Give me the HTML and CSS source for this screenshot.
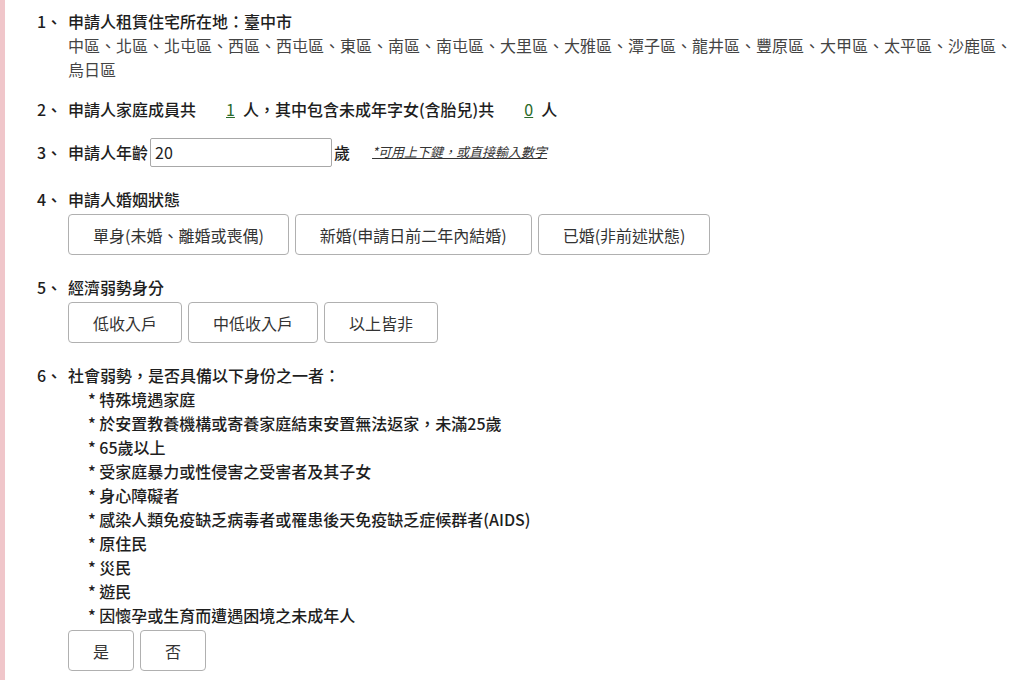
FILE: index.html
```html
<!DOCTYPE html>
<html lang="zh-TW">
<head>
<meta charset="utf-8">
<title>租金補貼試算</title>
<link rel="stylesheet" href="styles.css">
</head>
<body>
<div class="page">
  <div class="item">
    <span class="num">1、</span>
    <div class="body">
      <div class="label">申請人租賃住宅所在地：臺中市</div>
      <div class="districts">中區、北區、北屯區、西區、西屯區、東區、南區、南屯區、大里區、大雅區、潭子區、龍井區、豐原區、大甲區、太平區、沙鹿區、烏日區</div>
    </div>
  </div>

  <div class="item">
    <span class="num">2、</span>
    <div class="body">
      <div class="label">申請人家庭成員共<span class="count">1</span>人，其中包含未成年字女(含胎兒)共<span class="count">0</span>人</div>
    </div>
  </div>

  <div class="item item-input">
    <span class="num">3、</span>
    <div class="body row">
      <span class="label">申請人年齡</span>
      <input class="age" type="text" value="20">
      <span class="label unit">歲</span>
      <span class="hint">*可用上下鍵，或直接輸入數字</span>
    </div>
  </div>

  <div class="item">
    <span class="num">4、</span>
    <div class="body">
      <div class="label">申請人婚姻狀態</div>
      <div class="btns">
        <button class="opt">單身(未婚、離婚或喪偶)</button>
        <button class="opt">新婚(申請日前二年內結婚)</button>
        <button class="opt">已婚(非前述狀態)</button>
      </div>
    </div>
  </div>

  <div class="item">
    <span class="num">5、</span>
    <div class="body">
      <div class="label">經濟弱勢身分</div>
      <div class="btns">
        <button class="opt">低收入戶</button>
        <button class="opt">中低收入戶</button>
        <button class="opt">以上皆非</button>
      </div>
    </div>
  </div>

  <div class="item">
    <span class="num">6、</span>
    <div class="body">
      <div class="label">社會弱勢，是否具備以下身份之一者：</div>
      <ul class="list">
        <li>* 特殊境遇家庭</li>
        <li>* 於安置教養機構或寄養家庭結束安置無法返家，未滿25歲</li>
        <li>* 65歲以上</li>
        <li>* 受家庭暴力或性侵害之受害者及其子女</li>
        <li>* 身心障礙者</li>
        <li>* 感染人類免疫缺乏病毒者或罹患後天免疫缺乏症候群者(AIDS)</li>
        <li>* 原住民</li>
        <li>* 災民</li>
        <li>* 遊民</li>
        <li>* 因懷孕或生育而遭遇困境之未成年人</li>
      </ul>
      <div class="btns">
        <button class="opt">是</button>
        <button class="opt">否</button>
      </div>
    </div>
  </div>
</div>
</body>
</html>
```

FILE: styles.css
```css
html, body {
  margin: 0;
  padding: 0;
  background: #ffffff;
}

body {
  font-family: "Noto Sans CJK TC", "Noto Sans", "Liberation Sans", sans-serif;
  font-size: 16px;
  line-height: 24px;
  color: #222222;
}

.page {
  min-height: 680px;
  box-sizing: border-box;
  border-left: 5px solid #f0c6ca;
  padding: 9px 0 0 32px;
  display: flex;
  flex-direction: column;
  gap: 16px;
}

.item {
  display: flex;
  align-items: flex-start;
}

.num {
  width: 31px;
  flex: none;
  font-weight: 500;
  font-family: "Noto Sans CJK TC", sans-serif;
  color: #1e1e1e;
}

.body {
  display: flex;
  flex-direction: column;
}

.label {
  font-weight: 500;
  color: #1e1e1e;
}

.districts {
  color: #444444;
  font-weight: 400;
}

.count {
  display: inline-block;
  color: #2a6a2a;
  font-weight: 400;
  text-decoration: underline;
  margin: 0 8px 0 30px;
}

.row {
  flex-direction: row;
  align-items: center;
  height: 30px;
}

.item-input {
  margin-bottom: 4px;
  align-items: center;
}

.age {
  width: 182px;
  height: 29px;
  box-sizing: border-box;
  margin: 0 2px;
  padding: 0 4px;
  border: 1px solid #a8a8a8;
  border-radius: 2px;
  font-family: "Noto Sans CJK TC", sans-serif;
  font-size: 16px;
  color: #222222;
  background: #ffffff;
}

.unit {
  margin-right: 22px;
}

.hint {
  font-size: 13px;
  font-style: italic;
  text-decoration: underline;
  color: #333333;
}

.btns {
  display: flex;
  gap: 6px;
  margin-top: 3px;
  margin-bottom: 4px;
}

.opt {
  height: 41px;
  padding: 0 24px;
  border: 1px solid #b0b0b0;
  border-radius: 4px;
  background: #ffffff;
  font-family: "Noto Sans CJK TC", sans-serif;
  font-size: 16px;
  color: #333333;
}

.list {
  list-style: none;
  margin: 0;
  padding: 0 0 0 20px;
  font-weight: 500;
  color: #1e1e1e;
}

.list li {
  height: 24px;
}
```
